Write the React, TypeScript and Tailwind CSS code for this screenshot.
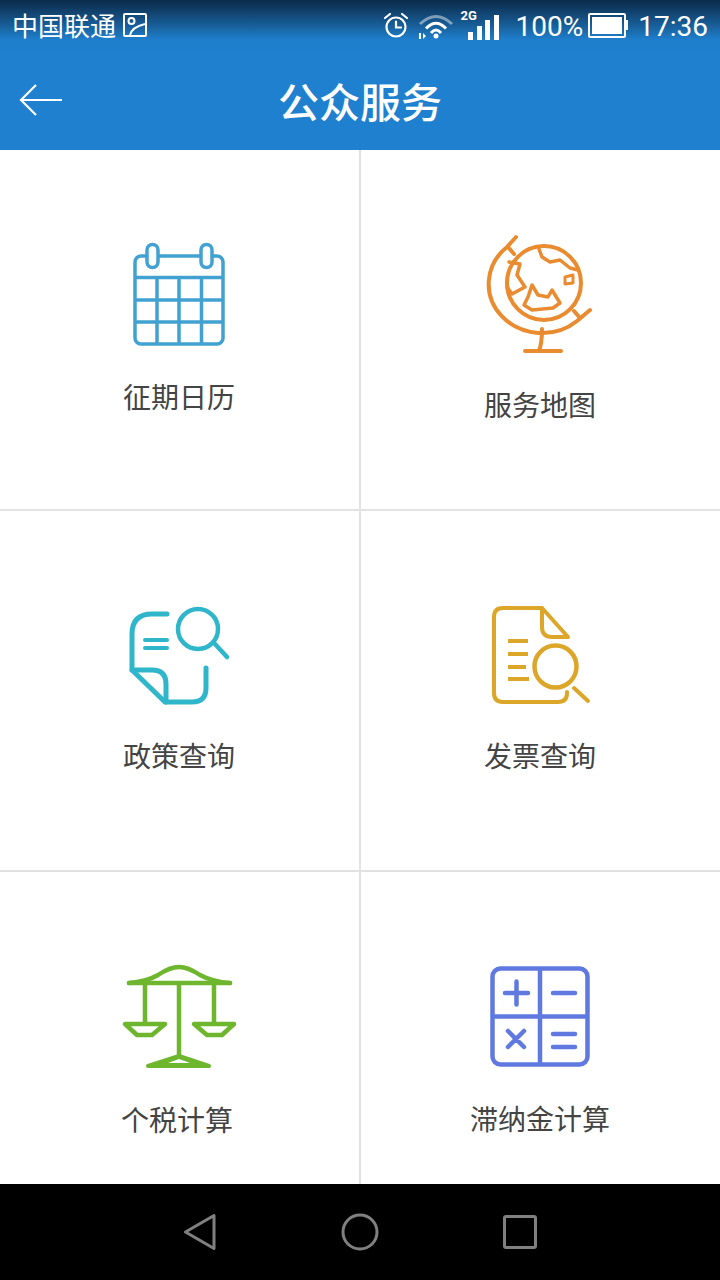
import type { ReactNode } from "react";

const cjk = { fontFamily: '"Noto Sans CJK SC", "Noto Sans", sans-serif' };
const roboto = { fontFamily: "Roboto, sans-serif" };

function Icon({ h = 140, children }: { h?: number; children: ReactNode }) {
  return (
    <svg width={140} height={h} viewBox={`0 0 140 ${h}`} fill="none" strokeLinecap="round" strokeLinejoin="round" className="block">
      {children}
    </svg>
  );
}

function CalendarIcon() {
  return (
    <Icon>
      <g stroke="#41a2d2" strokeWidth={3.500}>
        <rect x={25} y={31} width={88} height={88} rx={6} />
        <path d="M25 52.500h88M25 75h88M25 97h88M47 52.500v66.500M69 52.500v66.500M91.500 52.500v66.500" strokeLinecap="butt" />
        <rect x={37} y={19.500} width={11} height={23} rx={5.500} fill="#fff" />
        <rect x={91} y={19.500} width={11} height={23} rx={5.500} fill="#fff" />
      </g>
    </Icon>
  );
}

function GlobeIcon() {
  return (
    <Icon>
      <g stroke="#e98b2e" strokeWidth={4}>
        <circle cx={74} cy={58} r={37} />
        <path d="M46 12L37 22A50 46 0 0 0 107 96L120 85" />
        <path d="M38 22L44 29M104 86L110 93" />
        <path d="M72 104Q72 118 69 126M55 126H91" />
        <path d="M69 24L72 32L80 37L90 35L100 43L108 45" strokeWidth={3.500} />
        <path d="M39 37L50 39L47 50L55 62L42 69L37 62" strokeWidth={3.500} />
        <path d="M62 60L58 72L54 80L62 85L83 83L90 78L82 65L78 72L68 70Z" strokeWidth={3.500} />
        <path d="M95 52L103 50V58L95 59Z" strokeWidth={3} />
      </g>
    </Icon>
  );
}

function PolicyIcon() {
  return (
    <Icon h={130}>
      <g stroke="#2fb6ca" strokeWidth={5}>
        <path d="M57 24H42Q22 24 22 44V80L55 112H82Q96 112 96 98V78" />
        <path d="M22 80H42Q56 80 56 94V112" />
        <path d="M35 50H57M35 58H57" strokeWidth={4} />
        <circle cx={88} cy={39} r={20} strokeWidth={4.500} />
        <path d="M105 54L117 67" strokeWidth={4.500} />
      </g>
    </Icon>
  );
}

function InvoiceIcon() {
  return (
    <Icon h={130}>
      <g stroke="#dca628" strokeWidth={4}>
        <path d="M72 18H33Q24 18 24 27V103Q24 112 33 112H88Q97 112 97 103V102" />
        <path d="M72 18L98 47H82Q72 47 72 37Z" />
        <path d="M38 51H58M38 64H58M38 77H56M38 89H59" strokeLinecap="butt" />
        <circle cx={85.500} cy={76.500} r={21} strokeWidth={4.500} />
        <path d="M104 98L118 111" />
      </g>
    </Icon>
  );
}

function ScaleIcon() {
  return (
    <Icon h={130}>
      <g stroke="#6fb62f" strokeWidth={4.500}>
        <path d="M19 33H120" />
        <path d="M19 33Q36 32 48 25Q60 17 69 17Q78 17 90 25Q103 32 120 33" />
        <path d="M69 33V108M35 33V73M104 33V73" strokeLinecap="butt" />
        <path d="M15 74H55L42 85H27Z" />
        <path d="M84 74H124L112 85H97Z" />
      </g>
      <path d="M38 116L69 106L99 116Z" fill="#6fb62f" stroke="#6fb62f" strokeWidth={4} strokeLinejoin="round" />
      <path d="M58 113L69 109L80 113Z" fill="#fff" />
    </Icon>
  );
}

function CalcIcon() {
  return (
    <Icon h={130}>
      <g stroke="#5f79e1" strokeWidth={4.500}>
        <rect x={22.500} y={18.500} width={95} height={96} rx={8} />
        <path d="M70 18.500V114.500M22.500 66.500H117.500" strokeLinecap="butt" />
        <path d="M35 43H58M46.500 31.500V54.500M83 43H105M38 81L54 97M54 81L38 97M83 84H105M83 97H105" />
      </g>
    </Icon>
  );
}

type Tile = {
  label: string;
  icon: ReactNode;
  labelClass: string;
  top: string;
};

function ServiceTile({ label, icon, labelClass, top }: Tile) {
  return (
    <div className={`flex flex-col items-center ${top}`}>
      {icon}
      <span className={`text-[28px] leading-8 text-[#444] ${labelClass}`} style={cjk}>
        {label}
      </span>
    </div>
  );
}

function StatusBar() {
  return (
    <div className="flex h-[50px] items-center justify-between px-3 text-white">
      <div className="flex items-center gap-[7px]">
        <span className="text-[26px] leading-none" style={cjk}>
          中国联通
        </span>
        <svg width={24} height={24} viewBox="0 0 24 24" fill="none" stroke="#fff" strokeWidth={2}>
          <rect x={1} y={1} width={22} height={22} rx={1} />
          <circle cx={8.500} cy={8} r={3} />
          <path d="M7 22Q9 14 22 11" />
        </svg>
      </div>
      <div className="flex items-center">
        <svg width={26} height={26} viewBox="0 0 26 26" fill="none" stroke="#fff" strokeWidth={2.200} strokeLinecap="round">
          <circle cx={13} cy={15} r={9.500} />
          <path d="M13 9.500V15.500H18M2 6L7 2M24 6L19 2" />
        </svg>
        <svg width={36} height={28} viewBox="0 0 36 28" fill="none" className="ml-[9px]">
          <path d="M2 13Q18 -2 34 13" stroke="#fff" strokeOpacity={0.45} strokeWidth={3} />
          <path d="M8 17.500Q18 7 28 17.500M13 22Q18 16 23 22" stroke="#fff" strokeWidth={3} />
          <circle cx={18} cy={25} r={2.500} fill="#fff" />
          <path d="M1 22h2v6H1zM5 22l3 3-3 3z" fill="#fff" />
        </svg>
        <div className="relative ml-[7px] h-[30px] w-[38px]">
          <span className="absolute top-[-1px] left-0 text-[13px] leading-none font-bold" style={roboto}>
            2G
          </span>
          <div className="absolute right-0 bottom-0 flex items-end gap-[3.500px]">
            <div className="h-[8px] w-[5px] bg-white" />
            <div className="h-[14px] w-[5px] bg-white" />
            <div className="h-[20px] w-[5px] bg-white" />
            <div className="h-[25px] w-[5px] bg-white" />
          </div>
        </div>
        <span className="mt-[3px] ml-[17px] text-[28px] leading-none" style={roboto}>
          100%
        </span>
        <div className="ml-[5px] flex items-center">
          <div className="h-[25px] w-[38px] rounded-[2px] border-2 border-white p-[2px]">
            <div className="h-full w-full bg-white" />
          </div>
          <div className="h-[10px] w-[2px] bg-white" />
        </div>
        <span className="mt-[3px] ml-[10px] text-[28px] leading-none" style={roboto}>
          17:36
        </span>
      </div>
    </div>
  );
}

export default function App() {
  return (
    <div className="flex h-[1280px] w-[720px] flex-col overflow-hidden bg-white">
      {/* blue top area: system status bar fades into the title bar */}
      <div className="bg-linear-to-b from-[#0b2b49] to-[#1e7fcd] to-80%">
        <StatusBar />
      </div>
      <header className="grid h-[100px] grid-cols-[1fr_auto_1fr] items-center bg-[#1e80ce] text-white">
        <svg width={46} height={34} viewBox="0 0 46 34" fill="none" stroke="#fff" strokeWidth={2.200} className="ml-[19px]">
          <path d="M43 17H2M17 2L2 17L17 32" />
        </svg>
        <h1 className="text-[41px] leading-none font-medium" style={cjk}>
          公众服务
        </h1>
      </header>

      <main className="min-h-0 flex-1">
        <div className="grid h-[361px] grid-cols-[361px_359px] border-b-2 border-[#e2e2e2]">
          <div className="border-r-2 border-[#e2e2e2] pl-px">
            <ServiceTile top="pt-[75px]" labelClass="mt-[15px] mr-[2px]" label="征期日历" icon={<CalendarIcon />} />
          </div>
          <div className="pr-px">
            <ServiceTile top="pt-[75px]" labelClass="mt-[23px]" label="服务地图" icon={<GlobeIcon />} />
          </div>
        </div>
        <div className="grid h-[361px] grid-cols-[361px_359px] border-b-2 border-[#e2e2e2]">
          <div className="border-r-2 border-[#e2e2e2] pl-px">
            <ServiceTile top="pt-[79px]" labelClass="mt-[19px] mr-[2px]" label="政策查询" icon={<PolicyIcon />} />
          </div>
          <div className="pr-px">
            <ServiceTile top="pt-[79px]" labelClass="mt-[19px]" label="发票查询" icon={<InvoiceIcon />} />
          </div>
        </div>
        <div className="grid h-[312px] grid-cols-[361px_359px]">
          <div className="border-r-2 border-[#e2e2e2] pl-px">
            <ServiceTile top="pt-[78px]" labelClass="mt-[23px] mr-[6px]" label="个税计算" icon={<ScaleIcon />} />
          </div>
          <div className="pr-px">
            <ServiceTile top="pt-[78px]" labelClass="mt-[22px]" label="滞纳金计算" icon={<CalcIcon />} />
          </div>
        </div>
      </main>

      {/* system navigation keys */}
      <nav className="flex h-[96px] items-center justify-center gap-[120px] bg-black">
        <svg width={40} height={40} viewBox="0 0 40 40" fill="none" stroke="#808080" strokeWidth={3} strokeLinejoin="round">
          <path d="M34 3.500V36.500L5.500 20Z" />
        </svg>
        <svg width={40} height={40} viewBox="0 0 40 40" fill="none" stroke="#808080" strokeWidth={3}>
          <circle cx={20} cy={20} r={17} />
        </svg>
        <svg width={40} height={40} viewBox="0 0 40 40" fill="none" stroke="#808080" strokeWidth={3} strokeLinejoin="round">
          <rect x={4.500} y={4.500} width={31} height={31} rx={1.500} />
        </svg>
      </nav>
    </div>
  );
}
